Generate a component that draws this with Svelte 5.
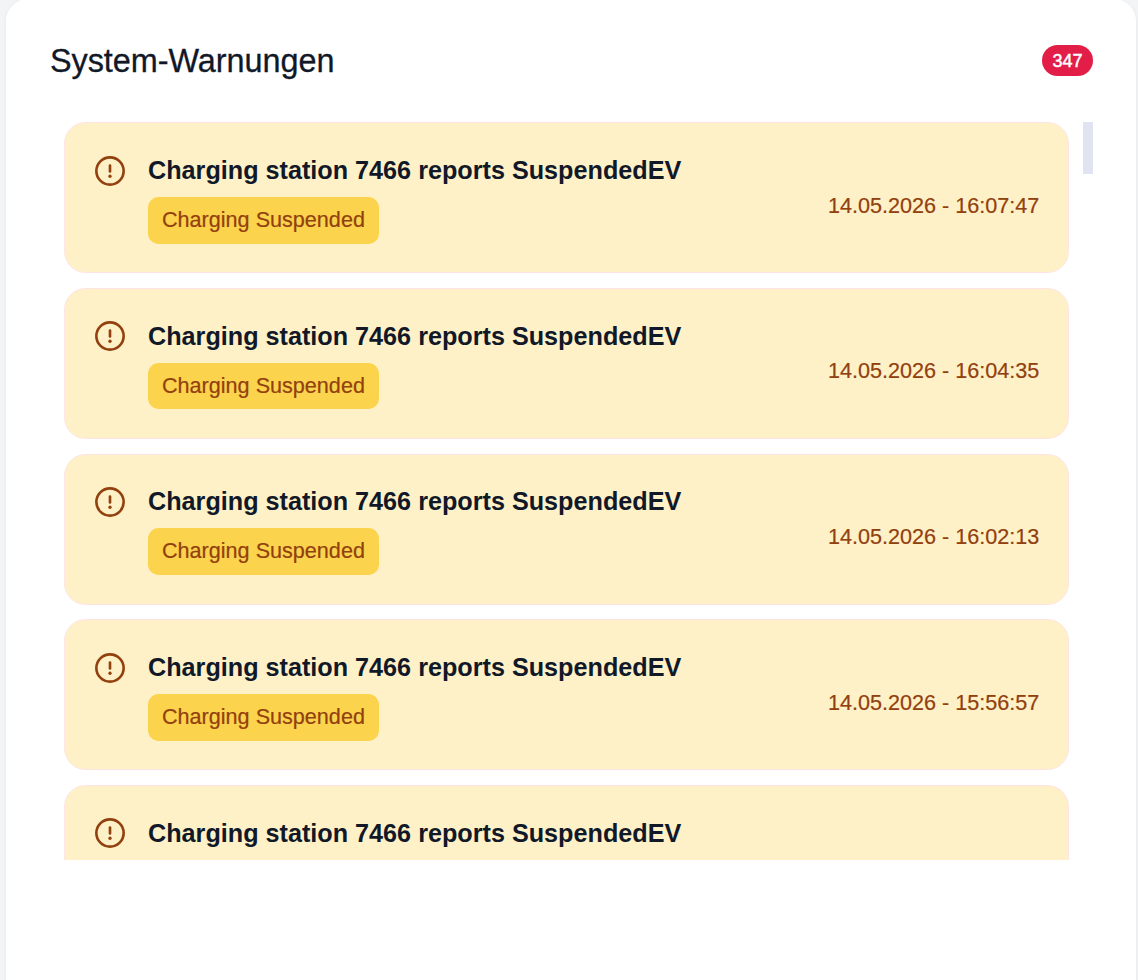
<script lang="ts">
  interface Warning {
    title: string
    label: string
    time: string
  }

  const total = 347

  const title = 'Charging station 7466 reports SuspendedEV'
  const label = 'Charging Suspended'

  const warnings: Warning[] = [
    { title, label, time: '14.05.2026 - 16:07:47' },
    { title, label, time: '14.05.2026 - 16:04:35' },
    { title, label, time: '14.05.2026 - 16:02:13' },
    { title, label, time: '14.05.2026 - 15:56:57' }
  ]
</script>

{#snippet icon()}
  <svg class="icon" viewBox="0 0 24 24" fill="none" stroke="currentColor" stroke-width="1.75" stroke-linecap="round" aria-hidden="true">
    <circle cx="12" cy="12" r="9.1" />
    <path d="M12 8.4v3.9" />
    <circle cx="12" cy="15.5" r="1.1" fill="currentColor" stroke="none" />
  </svg>
{/snippet}

<section class="panel">
  <header class="panel-header">
    <h2>System-Warnungen</h2>
    <span class="count">{total}</span>
  </header>

  <div class="scroll-area">
    <ul class="warnings">
      {#each warnings as warning}
        <li class="warning">
          {@render icon()}
          <div class="details">
            <h3>{warning.title}</h3>
            <span class="label">{warning.label}</span>
          </div>
          <time>{warning.time}</time>
        </li>
      {/each}
      <li class="warning">
        {@render icon()}
        <div class="details">
          <h3>{title}</h3>
        </div>
      </li>
    </ul>
    <div class="scrollbar">
      <div class="thumb"></div>
    </div>
  </div>
</section>

<style>
  :global(body) {
    margin: 0;
    background: #f3f4f6;
    overflow: hidden;
  }

  .panel {
    box-sizing: border-box;
    height: 1010px;
    margin: -1px 2px 0 6px;
    padding: 38px 43px 0 44px;
    background: #fff;
    border-radius: 22px;
    box-shadow: 0 1px 4px rgba(0, 0, 0, 0.06);
    font-family: 'Liberation Sans', Arial, sans-serif;
    color: #111827;
  }

  .panel-header {
    display: flex;
    align-items: center;
    justify-content: space-between;
    height: 47px;
  }

  h2 {
    margin: 2px 0 0;
    font-size: 32.4px;
    font-weight: 400;
    line-height: 47px;
    letter-spacing: -0.04px;
    -webkit-text-stroke: 0.3px currentColor;
  }

  .count {
    box-sizing: border-box;
    width: 51px;
    height: 31px;
    border-radius: 16px;
    background: #e11d48;
    color: #fff;
    font-size: 18px;
    line-height: 32px;
    text-align: center;
    -webkit-text-stroke: 0.5px #fff;
  }

  .scroll-area {
    display: flex;
    height: 738px;
    margin-top: 38px;
    overflow: hidden;
  }

  .warnings {
    flex: 1;
    margin: 0;
    padding: 0.2px 14px 0;
    list-style: none;
  }

  .warning {
    display: flex;
    box-sizing: border-box;
    height: 151.2px;
    margin-bottom: 14.5px;
    padding: 28.8px 28.8px 0 27px;
    border: 1px solid #ffe4e6;
    border-radius: 21.6px;
    background: #fef1c7;
  }

  .icon {
    flex: none;
    width: 36px;
    height: 36px;
    margin: 0.7px 20px 0 0;
    color: #92400e;
  }

  .details {
    flex: 1;
  }

  h3 {
    margin: 0;
    font-size: 25.2px;
    font-weight: 700;
    line-height: 36.3px;
  }

  .label {
    display: inline-block;
    margin-top: 8.7px;
    padding: 0 14px;
    border-radius: 10.8px;
    background: #fcd34d;
    color: #92400e;
    font-size: 21.6px;
    line-height: 46.8px;
    -webkit-text-stroke: 0.2px currentColor;
  }

  time {
    margin-top: 35.7px;
    color: #92400e;
    font-size: 21.6px;
    line-height: 36px;
    -webkit-text-stroke: 0.2px currentColor;
  }

  .scrollbar {
    width: 10px;
  }

  .thumb {
    height: 52px;
    background: #e0e4f1;
  }
</style>
